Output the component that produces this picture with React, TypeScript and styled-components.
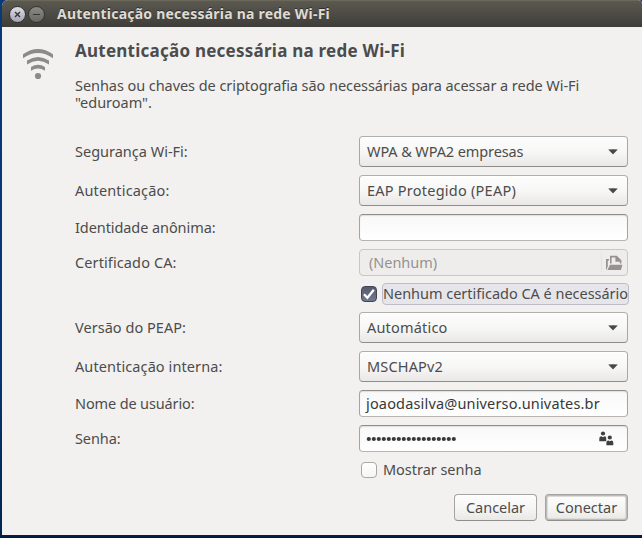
import React from "react";
import styled, { createGlobalStyle, css } from "styled-components";

const GlobalStyle = createGlobalStyle`
  * { box-sizing: border-box; }
  body {
    margin: 0;
    overflow: hidden;
    font: 14.5px/18px "Noto Sans", "Open Sans", sans-serif;
    color: #4c4c4c;
  }
`;

const Desktop = styled.div`
  width: 642px;
  height: 538px;
  padding: 0 0 3px 2px;
  background: linear-gradient(180deg, #093a77 0, #06366f 380px, #012451 534px, #00183a 538px);
`;

const DialogWindow = styled.div`
  display: flex;
  flex-direction: column;
  height: 535px;
  border-radius: 6px 4px 0 0;
  overflow: hidden;
  background: #f2f1ef;
`;

const TitleBar = styled.header`
  display: flex;
  align-items: center;
  height: 27px;
  flex: none;
  padding-left: 7px;
  border-top: 1px solid #6a685a;
  background: linear-gradient(#5b5950, #3e3d39);
`;

const WindowButton = styled.button<{ $active?: boolean }>`
  display: grid;
  place-items: center;
  width: 17px;
  height: 17px;
  margin-right: 2px;
  padding: 0;
  border: 1px solid #343330;
  border-radius: 50%;
  background: ${(p) => (p.$active ? "linear-gradient(#dddde4, #a3a5b5)" : "linear-gradient(#8a8983, #686761)")};
  color: #363531;
`;

const Text = styled.span<{ $track?: number }>`
  letter-spacing: ${(p) => p.$track ?? 0}px;
  white-space: nowrap;
`;

/* Text centred in a row, raised one pixel to sit on the row's optical middle. */
const RowText = styled(Text)`
  padding-bottom: 2px;
`;

const WindowTitle = styled(Text)`
  margin-left: 10px;
  font-size: 14px;
  font-weight: 700;
  color: #dfdbd2;
  text-shadow: 0 -1px 0 #2f2e2a;
`;

const Body = styled.main`
  display: flex;
  height: 508px;
  padding: 13px 14px 14px 21px;
`;

const Aside = styled.div`
  width: 52px;
  flex: none;
  padding-top: 9px;
`;

const Content = styled.div`
  display: flex;
  flex-direction: column;
  width: 553px;
`;

const Heading = styled.h1`
  margin: 0 0 15px;
  font-size: 17px;
  line-height: 22px;
  font-weight: 700;
  letter-spacing: 0.24px;
`;

const Message = styled.p`
  display: flex;
  flex-direction: column;
  height: 34px;
  margin: 0 0 25px;
  line-height: 17px;
`;

const Form = styled.form`
  display: flex;
  flex-direction: column;
  gap: 8px;
`;

const Row = styled.div`
  display: grid;
  grid-template-columns: 284px 269px;
  align-items: center;
`;

const CheckRow = styled(Row)<{ $focused?: boolean }>`
  height: 22px;
  margin: ${(p) => (p.$focused ? "-1px 0" : "-1px 0 0")};
`;

const Control = styled.div`
  display: flex;
  align-items: center;
  border: 1px solid #a3a19f;
  border-radius: 4px;
`;

const ComboBox = styled(Control)`
  justify-content: space-between;
  height: 31px;
  padding: 0 9px 0 7px;
  border-color: #b1afac #a9a7a4 #8f8d8a;
  background: linear-gradient(#fdfdfd, #f7f7f6 50%, #e9e8e7);
  box-shadow: inset 0 1px #fff;
`;

const Entry = styled(Control)`
  height: 27px;
  padding: 0 13px 0 6px;
  justify-content: space-between;
  border-color: #8f8e8c #a5a4a2 #b5b4b1;
  background: linear-gradient(#f8f8f8, #fff);
  box-shadow: inset 0 1px 1px #dededd;
  color: #383838;
`;

const FileChooser = styled(Control)`
  height: 27px;
  padding: 0 4px 0 9px;
  justify-content: space-between;
  border-color: #c9c7c5;
  background: #eeedec;
  color: #96928d;
`;

const FileButton = styled.div`
  display: flex;
  align-items: center;
  height: 19px;
  padding-left: 4px;
  border-left: 1px solid #e4e3e1;
`;

const CheckOption = styled.label`
  display: flex;
  align-items: center;
  width: 270px;
  padding-left: 2px;
`;

const CheckBox = styled.span<{ $checked?: boolean }>`
  display: grid;
  place-items: center;
  width: 16px;
  height: 16px;
  margin-right: 5px;
  border-radius: 4px;
  ${(p) =>
    p.$checked
      ? css`
          border: 1px solid #404455;
          background: linear-gradient(#565a6d, #747990);
        `
      : css`
          border: 1px solid #aaa8a5;
          background: linear-gradient(#fff, #f5f5f4);
        `}
`;

const CheckLabel = styled(Text)<{ $focused?: boolean }>`
  width: 247px;
  height: 22px;
  line-height: 18px;
  border: 1px solid ${(p) => (p.$focused ? "#bdbdca" : "transparent")};
  border-radius: 4px;
  background: ${(p) => (p.$focused ? "#e6e6ea" : "transparent")};
`;

const Actions = styled.footer`
  display: flex;
  justify-content: flex-end;
  gap: 8px;
  margin-top: 13px;
`;

const Button = styled.button<{ $primary?: boolean }>`
  display: flex;
  align-items: center;
  justify-content: center;
  width: 83px;
  height: 27px;
  padding: 0;
  border: 1px solid #a5a3a0;
  border-bottom-color: #918f8c;
  border-radius: 4px;
  background: linear-gradient(#fdfdfd, #f6f6f5 50%, #e9e8e7);
  box-shadow: ${(p) => (p.$primary ? "inset 0 0 0 1px #bdbbb8, inset 0 0 0 2px #dddcda" : "inset 0 1px #fff")};
  font: inherit;
  color: inherit;
`;

const WifiIcon = () => (
  <svg width="30" height="31" viewBox="0 0 30 31" fill="#8b8b8a">
    <path d="M0 5.2Q15-5.2 30 5.2V9.2Q15-1.2 0 9.2Z" />
    <path d="M4 11.6Q15 4.2 26 11.6V15.4Q15 8.2 4 15.4Z" />
    <path d="M8 18Q15 13.6 22 18V21.8Q15 17.2 8 21.8Z" />
    <circle cx="15" cy="27" r="3.1" />
  </svg>
);

const Arrow = () => (
  <svg width="10" height="6" viewBox="0 0 10 6">
    <path d="M.2.6Q5-.2 9.8.6L5.4 5Q5 5.4 4.6 5Z" fill="#484848" />
  </svg>
);

const FolderIcon = () => (
  <svg width="17" height="16" viewBox="0 0 17 16" fill="#96928d">
    <path d="M0 4h3v1.6H1.8V11L.4 14.8H0Z" />
    <path d="M4 8.5V.7h6.8l4.6 4.6v3.2h-1.6V6.8H9.4V2.4H5.6v6.1Z" />
    <path d="M4 9.8h12.4L15 15H1.4Z" />
  </svg>
);

const PeopleIcon = () => (
  <svg width="15" height="15" viewBox="0 0 15 15" fill="#3f3f3f">
    <circle cx="4" cy="2.5" r="2.1" />
    <path d="M.3 10.2V7.4Q.3 5.2 2.3 5.2L4 6.2 5.7 5.2Q7.2 5.3 7.2 7V10.2Z" />
    <circle cx="10.8" cy="6.5" r="2.1" />
    <path d="M7.4 14.2v-2.8q0-2 2-2l1.4.8 1.5-.8q2 0 2 2v2.8Z" />
  </svg>
);

const CheckMark = () => (
  <svg width="12" height="12" viewBox="0 0 12 12" fill="none" stroke="#fff" strokeWidth="2.3">
    <path d="M1 6.2 4.4 9.7 10.8 1.8" />
  </svg>
);

const PasswordDots = () => (
  <svg width="91" height="6" viewBox="0 0 91 6" fill="#383838">
    {Array.from({ length: 18 }, (_, i) => (
      <circle key={i} cx={2.8 + i * 5} cy="3" r="2.1" />
    ))}
  </svg>
);

export default function App() {
  return (
    <Desktop>
      <GlobalStyle />
      <DialogWindow>
        <TitleBar>
          <WindowButton $active aria-label="Fechar">
            <svg width="7" height="7" viewBox="0 0 7 7" stroke="currentColor" strokeWidth="1.4">
              <path d="M1 1l5 5M6 1 1 6" />
            </svg>
          </WindowButton>
          <WindowButton aria-label="Minimizar">
            <svg width="7" height="7" viewBox="0 0 7 7" stroke="currentColor">
              <path d="M0 3.5h7" />
            </svg>
          </WindowButton>
          <WindowTitle $track={0.23}>Autenticação necessária na rede Wi-Fi</WindowTitle>
        </TitleBar>
        <Body>
          <Aside><WifiIcon /></Aside>
          <Content>
            <Heading>Autenticação necessária na rede Wi-Fi</Heading>
            <Message>
              <Text $track={-0.06}>Senhas ou chaves de criptografia são necessárias para acessar a rede Wi-Fi</Text>
              <Text>"eduroam".</Text>
            </Message>
            <Form>
              <Row>
                <RowText>Segurança Wi-Fi:</RowText>
                <ComboBox><RowText $track={-0.1}>WPA &amp; WPA2 empresas</RowText><Arrow /></ComboBox>
              </Row>
              <Row>
                <RowText $track={0.155}>Autenticação:</RowText>
                <ComboBox><RowText $track={0.24}>EAP Protegido (PEAP)</RowText><Arrow /></ComboBox>
              </Row>
              <Row>
                <RowText $track={-0.08}>Identidade anônima:</RowText>
                <Entry />
              </Row>
              <Row>
                <RowText $track={0.11}>Certificado CA:</RowText>
                <FileChooser>
                  <RowText $track={-0.04}>(Nenhum)</RowText>
                  <FileButton><FolderIcon /></FileButton>
                </FileChooser>
              </Row>
              <CheckRow $focused>
                <span />
                <CheckOption>
                  <CheckBox $checked><CheckMark /></CheckBox>
                  <CheckLabel $focused $track={-0.02}>Nenhum certificado CA é necessário</CheckLabel>
                </CheckOption>
              </CheckRow>
              <Row>
                <RowText $track={0.035}>Versão do PEAP:</RowText>
                <ComboBox><RowText $track={0.19}>Automático</RowText><Arrow /></ComboBox>
              </Row>
              <Row>
                <RowText $track={0.1}>Autenticação interna:</RowText>
                <ComboBox><RowText $track={0.16}>MSCHAPv2</RowText><Arrow /></ComboBox>
              </Row>
              <Row>
                <RowText $track={-0.13}>Nome de usuário:</RowText>
                <Entry><RowText $track={0.165}>joaodasilva@universo.univates.br</RowText></Entry>
              </Row>
              <Row>
                <RowText $track={-0.1}>Senha:</RowText>
                <Entry><PasswordDots /><PeopleIcon /></Entry>
              </Row>
              <CheckRow>
                <span />
                <CheckOption>
                  <CheckBox />
                  <CheckLabel $track={-0.03}>Mostrar senha</CheckLabel>
                </CheckOption>
              </CheckRow>
            </Form>
            <Actions>
              <Button><RowText $track={-0.03}>Cancelar</RowText></Button>
              <Button $primary><RowText>Conectar</RowText></Button>
            </Actions>
          </Content>
        </Body>
      </DialogWindow>
    </Desktop>
  );
}
